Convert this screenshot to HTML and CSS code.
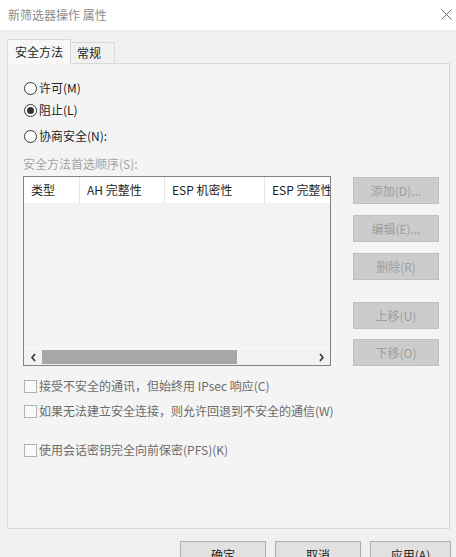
FILE: index.html
```html
<!DOCTYPE html>
<html lang="zh-CN">

<head>
    <meta charset="UTF-8">
    <meta name="viewport" content="width=device-width, initial-scale=1.0">
    <title>新筛选器操作 属性</title>
    <link rel="stylesheet" href="styles.css">
</head>

<body>
    <div class="window">
        <!-- 标题栏 -->
        <div class="titlebar">
            <span class="title">新筛选器操作 属性</span>
            <svg class="close" width="11" height="11" viewBox="0 0 11 11">
                <path d="M0.5 0.5 L10.5 10.5 M10.5 0.5 L0.5 10.5" stroke="#666" stroke-width="1" fill="none" />
            </svg>
        </div>

        <!-- 选项卡 -->
        <div class="tabs">
            <div class="tab active">安全方法</div>
            <div class="tab">常规</div>
        </div>

        <div class="panel">
            <label class="row radio-row r1"><span class="radio"></span>许可(M)</label>
            <label class="row radio-row r2"><span class="radio checked"></span>阻止(L)</label>
            <label class="row radio-row r3"><span class="radio"></span>协商安全(N):</label>
            <div class="row caption">安全方法首选顺序(S):</div>

            <div class="methods">
                <div class="listview">
                    <div class="header">
                        <div class="col c1">类型</div>
                        <div class="col c2">AH 完整性</div>
                        <div class="col c3">ESP 机密性</div>
                        <div class="col c4">ESP 完整性</div>
                    </div>
                    <div class="list-body"></div>
                    <div class="hscroll">
                        <span class="arrow">
                            <svg width="7" height="9" viewBox="0 0 7 9">
                                <polyline points="5,1 2,4.5 5,8" stroke="#333" stroke-width="1.6" fill="none" />
                            </svg>
                        </span>
                        <div class="track"><div class="thumb"></div></div>
                        <span class="arrow">
                            <svg width="7" height="9" viewBox="0 0 7 9">
                                <polyline points="2,1 5,4.5 2,8" stroke="#333" stroke-width="1.6" fill="none" />
                            </svg>
                        </span>
                    </div>
                </div>

                <div class="side-btns">
                    <button class="btn disabled">添加(D)...</button>
                    <button class="btn disabled">编辑(E)...</button>
                    <button class="btn disabled">删除(R)</button>
                    <button class="btn disabled gap-lg">上移(U)</button>
                    <button class="btn disabled">下移(O)</button>
                </div>
            </div>

            <label class="row check-row k1"><span class="checkbox"></span>接受不安全的通讯，但始终用 IPsec 响应(C)</label>
            <label class="row check-row k2"><span class="checkbox"></span>如果无法建立安全连接，则允许回退到不安全的通信(W)</label>
            <label class="row check-row k3"><span class="checkbox"></span>使用会话密钥完全向前保密(PFS)(K)</label>
        </div>

        <div class="footer">
            <button class="btn">确定</button>
            <button class="btn">取消</button>
            <button class="btn">应用(A)</button>
        </div>
    </div>
</body>

</html>
```

FILE: styles.css
```css
* {
    margin: 0;
    padding: 0;
    box-sizing: border-box;
}

body {
    background-color: #f0f0f0;
    font: 12px/20px "Noto Sans CJK SC", "Liberation Sans", sans-serif;
    color: #1e1e1e;
    overflow: hidden;
}

.window {
    width: 456px;
    height: 557px;
}

/* 标题栏 */
.titlebar {
    height: 30px;
    background-color: #fff;
    display: flex;
    align-items: center;
    justify-content: space-between;
    padding: 0 4px 1px 8px;
}

.titlebar .title {
    color: #8c8c8c;
}

/* 选项卡 */
.tabs {
    display: flex;
    align-items: flex-end;
    margin-top: 9px;
    padding-left: 7px;
    height: 24px;
}

.tab {
    height: 21px;
    line-height: 19px;
    padding: 0 7px;
    border: 1px solid #d9d9d9;
    border-bottom: none;
    background-color: #f0f0f0;
}

.tab.active {
    height: 25px;
    line-height: 23px;
    width: 64px;
    padding: 0 7px;
    background-color: #f7f7f7;
    margin-bottom: -1px;
    position: relative;
    z-index: 1;
}

.tab + .tab {
    border-left: none;
    width: 44px;
    padding-left: 6px;
}

.panel {
    margin: 0 6px 0 7px;
    height: 466px;
    border: 1px solid #d9d9d9;
    background-color: #f4f4f4;
    padding: 0 0 0 16px;
}

.row {
    display: flex;
    align-items: center;
    height: 20px;
}

.r1 { margin-top: 14px; }
.r2 { margin-top: 2px; }
.r3 { margin-top: 6px; }

.caption {
    margin-top: 8px;
    color: #a3a3a3;
    padding-left: 0;
    margin-left: -1px;
}

.radio {
    width: 13px;
    height: 13px;
    border: 1px solid #333;
    border-radius: 50%;
    background-color: #fff;
    margin-right: 2px;
    display: flex;
    align-items: center;
    justify-content: center;
}

.radio.checked::after {
    content: "";
    width: 7px;
    height: 7px;
    border-radius: 50%;
    background-color: #333;
}

/* 列表和按钮 */
.methods {
    display: flex;
    margin-top: 2px;
    margin-left: -1px;
}

.listview {
    width: 308px;
    height: 190px;
    border: 1px solid #828282;
    background-color: #f3f2f4;
    display: flex;
    flex-direction: column;
    overflow: hidden;
}

.header {
    display: flex;
    height: 26px;
    background-color: #fff;
    flex-shrink: 0;
}

.col {
    line-height: 26px;
    padding-left: 7px;
    border-right: 1px solid #e5e5e5;
    white-space: nowrap;
    flex-shrink: 0;
}

.c1 { width: 56px; }
.c2 { width: 85px; }
.c3 { width: 100px; }
.c4 { width: 90px; border-right: none; }

.list-body {
    flex: 1;
}

.hscroll {
    height: 17px;
    display: flex;
    align-items: center;
    background-color: #f2f2f2;
    border-top: 1px solid #fafafa;
}

.hscroll .arrow {
    width: 18px;
    height: 16px;
    display: flex;
    align-items: center;
    justify-content: center;
}

.track {
    flex: 1;
    height: 16px;
    padding: 1px 0;
}

.thumb {
    width: 195px;
    height: 14px;
    background-color: #a7a7a9;
}

.side-btns {
    margin-left: 22px;
    display: flex;
    flex-direction: column;
    padding-top: 1px;
}

.btn {
    width: 86px;
    height: 27px;
    font: inherit;
    color: #1e1e1e;
    background-color: #e1e1e1;
    border: 1px solid #adadad;
}

.btn.disabled {
    background-color: #cccccc;
    border-color: #bfbfbf;
    color: #9d9d9d;
}

.side-btns .btn + .btn {
    margin-top: 11px;
}

.side-btns .btn.gap-lg {
    margin-top: 22px;
}

.side-btns .btn:last-child {
    margin-top: 10px;
}

/* 复选框 */
.check-row {
    color: #6b6b6b;
}

.k1 { margin-top: 10px; }
.k2 { margin-top: 5px; }
.k3 { margin-top: 19px; }

.checkbox {
    width: 13px;
    height: 13px;
    border: 1px solid #b3b3b3;
    background-color: #fafafa;
    margin-right: 2px;
}

/* 底部按钮 */
.footer {
    display: flex;
    justify-content: flex-end;
    gap: 9px;
    margin-top: 12px;
    padding-right: 5px;
}

.footer .btn {
    width: 86px;
    height: 28px;
}

.footer .btn:last-child {
    width: 81px;
}
```
